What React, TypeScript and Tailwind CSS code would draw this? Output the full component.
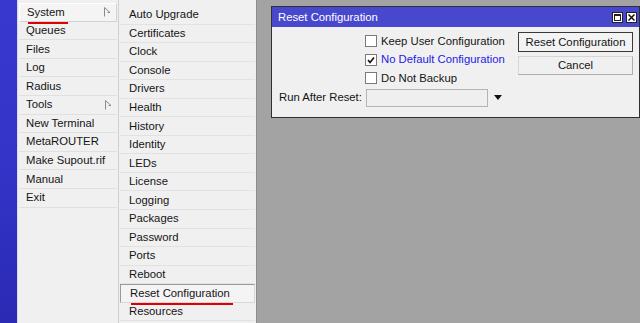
import React from "react";

const mainItems = [
  { label: "System", arrow: true, selected: true, mark: true },
  { label: "Queues" },
  { label: "Files" },
  { label: "Log" },
  { label: "Radius" },
  { label: "Tools", arrow: true },
  { label: "New Terminal" },
  { label: "MetaROUTER" },
  { label: "Make Supout.rif" },
  { label: "Manual" },
  { label: "Exit" },
];

const systemItems = [
  "Auto Upgrade",
  "Certificates",
  "Clock",
  "Console",
  "Drivers",
  "Health",
  "History",
  "Identity",
  "LEDs",
  "License",
  "Logging",
  "Packages",
  "Password",
  "Ports",
  "Reboot",
  "Reset Configuration",
  "Resources",
];

function SubArrow() {
  return (
    <svg width="7" height="10" viewBox="0 0 7 10" className="shrink-0">
      <path d="M0.5 0.5 V9.5 M0.5 0.5 L6 5.5 L3.5 5.5" fill="none" stroke="#8a8a8a" strokeWidth="1" />
    </svg>
  );
}

// red annotation line under a menu label
function Marked({ children }: { children: React.ReactNode }) {
  return (
    <span className="relative inline-block">
      {children}
      <span className="absolute left-[1px] right-[-3px] bottom-[-3px] h-[2px] bg-[#e00000]" />
    </span>
  );
}

function Checkbox({ checked }: { checked?: boolean }) {
  return (
    <span className="w-[12px] h-[12px] border border-[#7a7a7a] bg-white flex items-center justify-center shrink-0">
      {checked && (
        <svg width="8" height="8" viewBox="0 0 8 8">
          <path d="M1 4 L3 6.5 L7 1.5" fill="none" stroke="#111" strokeWidth="1.6" />
        </svg>
      )}
    </span>
  );
}

export default function App() {
  return (
    <div
      className="w-[640px] h-[323px] flex overflow-hidden bg-[#a3a3a3] text-[11.3px] text-[#141414]"
      style={{ fontFamily: '"Liberation Sans", Arial, sans-serif' }}
    >
      {/* blue side strip */}
      <div className="w-[18px] shrink-0 bg-gradient-to-b from-[#3838cf] via-[#3434c8] to-[#2a2ab4] border-r border-[#d8d8f0]" />

      {/* main menu */}
      <div className="w-[101px] shrink-0 bg-[#f0f0f0] border-r border-[#cfcfcf] pt-[3px] px-[1px]">
        {mainItems.map((item) => (
          <div
            key={item.label}
            className={`h-[18.6px] flex items-center justify-between pl-[7px] pr-[5px] ${
              item.selected
                ? "border border-[#d2d2d2] border-t-white border-l-white bg-[#f4f4f4]"
                : "border-b border-[#e0e0e0]"
            }`}
          >
            {item.mark ? <Marked>{item.label}</Marked> : <span>{item.label}</span>}
            {item.arrow && <SubArrow />}
          </div>
        ))}
      </div>

      {/* System submenu */}
      <div className="w-[138px] shrink-0 bg-[#f0f0f0] border-r border-[#8c8c8c] pt-[6px] px-[1px]">
        {systemItems.map((label) => {
          const selected = label === "Reset Configuration";
          return (
            <div
              key={label}
              className={`h-[18.55px] flex items-center pl-[9px] ${
                selected
                  ? "border border-[#9a9a9a] border-r-[#d8d8d8] border-b-[#d8d8d8] bg-[#f4f4f4]"
                  : "border-b border-[#e2e2e2]"
              }`}
            >
              {selected ? <Marked>{label}</Marked> : <span>{label}</span>}
            </div>
          );
        })}
      </div>

      {/* desktop area */}
      <div className="flex-1 pl-[14px] pt-[6px]">
        <div className="h-[112px] border border-[#2f2f2f] bg-[#f0f0f0] flex flex-col">
          <div className="h-[20px] shrink-0 bg-[#4848cf] flex items-center justify-between pl-[6px] pr-[2px] text-white">
            <span>Reset Configuration</span>
            <div className="flex gap-[3px]">
              <span className="w-[11px] h-[11px] bg-white border border-[#222] flex items-center justify-center">
                <span className="w-[7px] h-[7px] border border-[#222] border-t-2" />
              </span>
              <span className="w-[11px] h-[11px] bg-white border border-[#222] flex items-center justify-center">
                <svg width="7" height="7" viewBox="0 0 7 7">
                  <path d="M0.5 0.5 L6.5 6.5 M6.5 0.5 L0.5 6.5" stroke="#111" strokeWidth="1.5" />
                </svg>
              </span>
            </div>
          </div>

          <div className="flex shrink-0">
            <div className="flex-1 pl-[93px] pt-[5px] flex flex-col">
              <label className="h-[18.5px] flex items-center gap-[4px]">
                <Checkbox />
                <span>Keep User Configuration</span>
              </label>
              <label className="h-[18.5px] flex items-center gap-[4px]">
                <Checkbox checked />
                <span className="text-[#2222e6]">No Default Configuration</span>
              </label>
              <label className="h-[18.5px] flex items-center gap-[4px]">
                <Checkbox />
                <span>Do Not Backup</span>
              </label>
            </div>
            <div className="w-[115px] mr-[6px] pt-[5px] flex flex-col gap-[4px]">
              <button className="h-[20px] border border-[#3a3a3a] bg-[#f3f3f3] flex items-center justify-center">
                Reset Configuration
              </button>
              <button className="h-[19px] border border-[#adadad] border-t-[#d6d6d6] border-l-[#d6d6d6] bg-[#f0f0f0] flex items-center justify-center">
                Cancel
              </button>
            </div>
          </div>

          <div className="flex items-center shrink-0 mt-[1px] pl-[7px]">
            <span className="w-[87px]">Run After Reset:</span>
            <span className="w-[122px] h-[18px] border border-[#b4b4b4] bg-[#efefef]" />
            <svg width="8" height="5" viewBox="0 0 8 5" className="ml-[6px]">
              <path d="M0 0 H8 L4 5 Z" fill="#111" />
            </svg>
          </div>
        </div>
      </div>
    </div>
  );
}
